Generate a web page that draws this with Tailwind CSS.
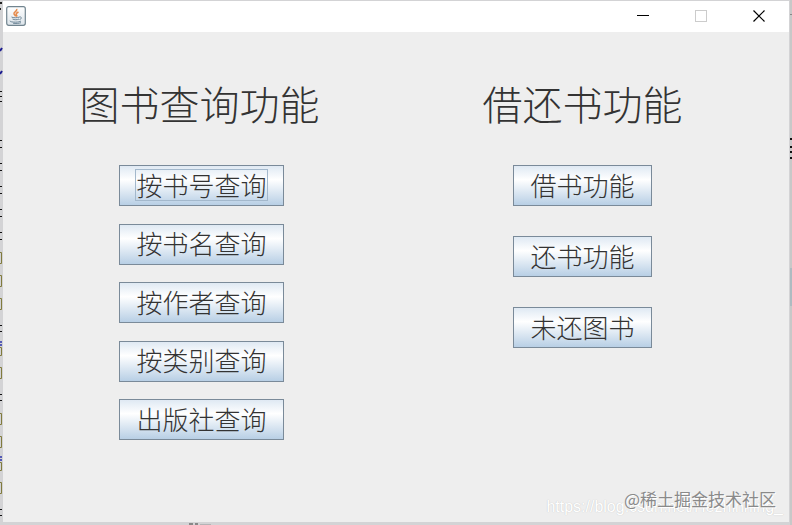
<!DOCTYPE html>
<html lang="zh-CN">
<head>
<meta charset="utf-8">
<title>图书管理</title>
<script src="https://cdn.jsdelivr.net/npm/@tailwindcss/browser@4"></script>
</head>
<body class="relative flex min-h-screen flex-col overflow-hidden bg-[#d3d3d5] pt-px pr-[3px] pb-[3px] pl-[3px] font-['Noto_Sans_CJK_SC',sans-serif] text-[#333]">
  <!-- editor text peeking out behind the window -->
  <svg class="absolute top-0 left-0" width="3" height="525" viewBox="0 0 3 525" fill="none" aria-hidden="true">
    <path d="M0 3h2M0 9h1" stroke="#222" stroke-width="2"/>
    <path d="M0 51l2-3M0 74l2-3" stroke="#1c1c90" stroke-width="2"/>
    <path d="M0 91.500h2M0 96.500h2M0 101.500h2M0 140.500h2M0 147.500h2M0 163.500h2M0 170.500h2M0 186.500h2M0 193.500h2M0 209.500h2M0 216.500h2M0 232.500h2M0 239.500h2M0 325.500h2M0 331.500h2M0 394.500h2M0 400.500h2M0 509.500h2M0 515.500h2" stroke="#111"/>
    <path d="M-1 252.500h2.500v11h-2.500M-1 275.500h2.500v11h-2.500M-1 298.500h2.500v11h-2.500M-1 347.500h2.500v8h-2.500M-1 367.500h2.500v11h-2.500M-1 413.500h2.500v11h-2.500M-1 436.500h2.500v11h-2.500M-1 462.500h2.500v8h-2.500M-1 482.500h2.500v11h-2.500" stroke="#817b3c"/>
    <path d="M1 341v5M1 456v5" stroke="#555bb5" stroke-width="2" stroke-dasharray="2 1"/>
  </svg>
  <svg class="absolute top-0 right-0" width="3" height="525" viewBox="0 0 3 525" aria-hidden="true">
    <path d="M1 0h2v525h-2z" fill="#c8c8c8"/>
    <path d="M1 14h2v1h-2z" fill="#888"/>
    <path d="M1 138h2v2h-2zM1 146h2v2h-2zM1 151h2v2h-2zM1 157h2v2h-2z" fill="#111"/>
    <path d="M1 268h2v38h-2z" fill="#aebbc1"/>
  </svg>
  <svg class="absolute bottom-0 left-[188px]" width="24" height="3" viewBox="0 0 24 3" fill="#888" aria-hidden="true"><path d="M1 1h4v2h-4zM7 1h3v2h-3z"/><path d="M12 2h11v1h-11z" opacity=".4"/></svg>

  <header class="flex h-[31px] shrink-0 items-center justify-between bg-white pr-px pb-[2px] pl-[3px]">
    <svg width="20" height="20" viewBox="0 0 20 20" fill="none" role="img" aria-label="Java">
      <defs><linearGradient id="g" x2="0" y2="1"><stop stop-color="#fff"/><stop offset="1" stop-color="#dce4ea"/></linearGradient></defs>
      <rect x=".7" y=".7" width="18.6" height="18.6" rx="2" fill="url(#g)" stroke="#71848f" stroke-width="1.2"/>
      <path d="M10.5 3c1.500 2-3.500 3-2.500 5 .4 1 1.500 1.500 1.500 2.500M12.500 6c-2 1-3 2-2 3 .6.700.4 1.300 0 1.800" stroke="#e58a4b" stroke-width="1.500"/>
      <path d="M5.500 11c1.500 1 6 1 8 0M6.500 13c2 1 4.500 1 6.500 0M13.500 11c2.500-.5 2.500 2 0 2.500M4 14.800c-1 1.500 9 2 11 .2M7 17.200c2.500.5 6 .3 8-.5" stroke="#6f8798" stroke-width="1"/>
    </svg>
    <div class="flex h-full">
      <button type="button" aria-label="最小化" class="flex w-[58px] items-center justify-center"><svg width="12" height="12" viewBox="0 0 12 12" shape-rendering="crispEdges"><path d="M0 5h12v1H0z" fill="#000"/></svg></button>
      <button type="button" aria-label="最大化" disabled class="flex w-[58px] items-center justify-center"><svg width="12" height="12" viewBox="0 0 12 12" fill="none" shape-rendering="crispEdges"><path d="M.5.5h11v11H.5z" stroke="#ccc"/></svg></button>
      <button type="button" aria-label="关闭" class="flex w-[58px] items-center justify-center"><svg width="12" height="12" viewBox="0 0 12 12" fill="none"><path d="M.5.5l11 11M11.500.5l-11 11" stroke="#000" stroke-width="1.200"/></svg></button>
    </div>
  </header>

  <main class="grid grow grid-cols-2 bg-[#eee] pt-[41px] pr-[16px] pl-[8px]">
    <section class="flex flex-col items-center gap-[32px]">
      <h1 class="pr-[4px] text-[40px] leading-[60px] font-light">图书查询功能</h1>
      <div class="flex h-[275px] flex-col justify-between">
        <button type="button" class="flex h-[41px] items-center border border-[#7a8a99] bg-linear-to-b from-[#dfe9f3] via-white via-35% to-[#b8cfe5] px-[16px] pb-[2px] text-[26px] leading-[30px] font-light"><span class="outline outline-[#a3b8cc]">按书号查询</span></button>
        <button type="button" class="flex h-[41px] items-center border border-[#7a8a99] bg-linear-to-b from-[#dfe9f3] via-white via-35% to-[#b8cfe5] px-[16px] pb-[2px] text-[26px] leading-[30px] font-light">按书名查询</button>
        <button type="button" class="flex h-[41px] items-center border border-[#7a8a99] bg-linear-to-b from-[#dfe9f3] via-white via-35% to-[#b8cfe5] px-[16px] pb-[2px] text-[26px] leading-[30px] font-light">按作者查询</button>
        <button type="button" class="flex h-[41px] items-center border border-[#7a8a99] bg-linear-to-b from-[#dfe9f3] via-white via-35% to-[#b8cfe5] px-[16px] pb-[2px] text-[26px] leading-[30px] font-light">按类别查询</button>
        <button type="button" class="flex h-[41px] items-center border border-[#7a8a99] bg-linear-to-b from-[#dfe9f3] via-white via-35% to-[#b8cfe5] px-[16px] pb-[2px] text-[26px] leading-[30px] font-light">出版社查询</button>
      </div>
    </section>
    <section class="flex flex-col items-center gap-[32px]">
      <h1 class="text-[40px] leading-[60px] font-light">借还书功能</h1>
      <div class="flex flex-col gap-[30px]">
        <button type="button" class="flex h-[41px] items-center border border-[#7a8a99] bg-linear-to-b from-[#dfe9f3] via-white via-35% to-[#b8cfe5] px-[16px] pb-[2px] text-[26px] leading-[30px] font-light">借书功能</button>
        <button type="button" class="flex h-[41px] items-center border border-[#7a8a99] bg-linear-to-b from-[#dfe9f3] via-white via-35% to-[#b8cfe5] px-[16px] pb-[2px] text-[26px] leading-[30px] font-light">还书功能</button>
        <button type="button" class="flex h-[41px] items-center border border-[#7a8a99] bg-linear-to-b from-[#dfe9f3] via-white via-35% to-[#b8cfe5] px-[16px] pb-[2px] text-[26px] leading-[30px] font-light">未还图书</button>
      </div>
    </section>
  </main>

  <p class="absolute right-[9px] bottom-[8px] font-['Liberation_Sans',sans-serif] text-[16px] leading-[20px] text-white [text-shadow:0_0_1px_#bbb]">https://blog.csdn.net/Hezhinning_</p>
  <p class="absolute right-[16px] bottom-[14px] text-[17px] leading-[24px] text-[#8a8a8a] [text-shadow:1px_1px_0_#fff]">@稀土掘金技术社区</p>
</body>
</html>
